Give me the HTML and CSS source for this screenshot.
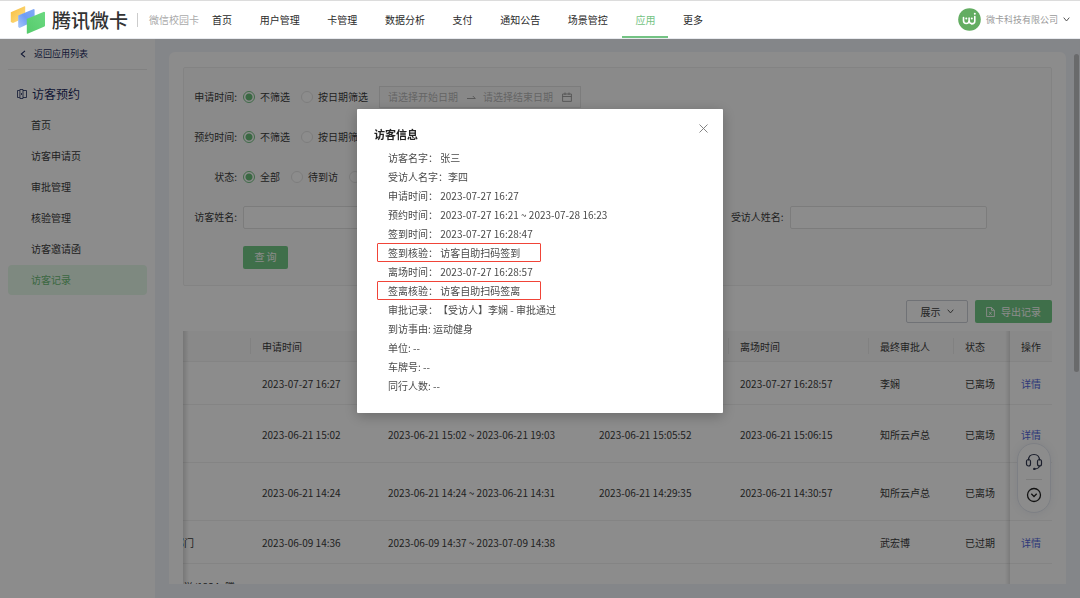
FILE: index.html
```html
<!DOCTYPE html>
<html lang="zh-CN">
<head>
<meta charset="utf-8">
<title>腾讯微卡 - 访客记录</title>
<link rel="stylesheet" href="styles.css">
</head>
<body>
<header class="topbar">
  <svg class="logo" width="36" height="28" viewBox="0 0 36 28" aria-hidden="true">
    <defs>
      <linearGradient id="ly" x1="0" y1="0" x2="1" y2="1"><stop offset="0" stop-color="#f8bd3a"/><stop offset="1" stop-color="#fde08c"/></linearGradient>
      <linearGradient id="lb" x1="0" y1="1" x2="1" y2="0"><stop offset="0" stop-color="#a9c8fb"/><stop offset="0.500" stop-color="#6f9df5"/><stop offset="1" stop-color="#82aaf8"/></linearGradient>
      <linearGradient id="lg" x1="0" y1="1" x2="1" y2="0"><stop offset="0" stop-color="#56cb6c"/><stop offset="1" stop-color="#6bd981"/></linearGradient>
    </defs>
    <path fill="url(#ly)" d="M0.800 6.200 L14.600 0.200 L15.200 0.500 V7 L8.500 10 V14.500 L3 17 L0.800 16Z"/>
    <path fill="url(#lb)" d="M8.200 9.500 L23.800 3 L24.600 3.400 V10 L17 13.500 V18.500 L9.500 22 L8.200 21Z"/>
    <path fill="url(#lg)" d="M17 12.800 L34 5.800 L35 6.200 V19.800 L34.500 20.500 L17.500 27.800 L16.800 27.400 V13.200Z"/>
  </svg>
  <span class="brand">腾讯微卡</span>
  <span class="product">微信校园卡</span>
  <nav class="nav">
    <a href="#">首页</a><a href="#">用户管理</a><a href="#">卡管理</a><a href="#">数据分析</a><a href="#">支付</a><a href="#">通知公告</a><a href="#">场景管控</a><a href="#" class="current">应用</a><a href="#">更多</a>
  </nav>
  <button class="account" type="button">
    <svg width="23" height="23" viewBox="0 0 23 23" aria-hidden="true"><circle cx="11.500" cy="11.500" r="11.300" fill="#63ad62"/><g fill="none" stroke="#fff" stroke-width="1.600" stroke-linecap="round"><path d="M5.500 9.500v3q0 3 2.800 3t2.800-3v-2.500M11.100 12.500q0 3 2.600 3M16.800 8.500v4.500q0 3-3.300 2.900"/></g><g fill="#fff"><circle cx="8.300" cy="10.600" r="1"/><circle cx="13.800" cy="10.600" r="1"/><circle cx="16.800" cy="5.800" r="1"/></g></svg>
    <span>微卡科技有限公司</span>
    <svg width="7" height="5" viewBox="0 0 7 5" aria-hidden="true"><path d="M0.700 0.600 3.500 4 6.300 0.600" fill="none" stroke="#555" stroke-width="1"/></svg>
  </button>
</header>

<div class="layout">
  <aside class="sidebar">
    <a href="#" class="back"><svg width="6" height="8" viewBox="0 0 6 8" aria-hidden="true"><path d="M5 0.800 1.300 4 5 7.200" fill="none" stroke="#1d2b5e" stroke-width="1.100"/></svg>返回应用列表</a>
    <h2 class="group">
      <svg width="10" height="10" viewBox="0 0 10 10" aria-hidden="true"><path d="M2.700 1.500H0.500V8.500H2.700M2.900 0.500H6V9.500H2.900ZM6 1.500H9.500V8.500H6M4.500 4V6" fill="none" stroke="#1d2b5e" stroke-width="0.800"/></svg>访客预约</h2>
    <ul class="menu">
      <li><a href="#">首页</a></li>
      <li><a href="#">访客申请页</a></li>
      <li><a href="#">审批管理</a></li>
      <li><a href="#">核验管理</a></li>
      <li><a href="#">访客邀请函</a></li>
      <li><a href="#" class="active">访客记录</a></li>
    </ul>
  </aside>

  <main class="content">
    <section class="card">
      <form class="filters">
        <div class="row">
          <span class="label">申请时间:</span>
          <label class="radio"><input type="radio" name="apply" checked>不筛选</label>
          <label class="radio"><input type="radio" name="apply">按日期筛选</label>
          <div class="range">
            <input type="text" placeholder="请选择开始日期" aria-label="开始日期" disabled>
            <svg width="9" height="5" viewBox="0 0 9 5" aria-hidden="true"><path d="M0 3.500H8.300L5.800 1" fill="none" stroke="#999" stroke-width="0.900"/></svg>
            <input type="text" placeholder="请选择结束日期" aria-label="结束日期" disabled>
            <svg width="10" height="10" viewBox="0 0 10 10" aria-hidden="true"><path d="M0.600 2H9.400V9.400H0.600ZM0.600 4.500H9.400M3 0.500V3M7 0.500V3" fill="none" stroke="#999" stroke-width="0.900"/></svg>
          </div>
        </div>
        <div class="row">
          <span class="label">预约时间:</span>
          <label class="radio"><input type="radio" name="book" checked>不筛选</label>
          <label class="radio"><input type="radio" name="book">按日期筛选</label>
        </div>
        <div class="row">
          <span class="label">状态:</span>
          <label class="radio"><input type="radio" name="state" checked>全部</label>
          <label class="radio"><input type="radio" name="state">待到访</label>
          <label class="radio"><input type="radio" name="state" aria-label="已到访"></label>
        </div>
        <div class="fields">
          <div class="row"><label class="label" for="visitor">访客姓名:</label><input class="text" id="visitor" type="text"></div>
          <div class="row last"><label class="label" for="host">受访人姓名:</label><input class="text" id="host" type="text"></div>
        </div>
        <div class="row"><span class="label"></span><button class="btn primary" type="button">查 询</button></div>
      </form>

      <div class="toolbar">
        <button class="btn show" type="button">展示<svg width="7" height="5" viewBox="0 0 7 5" aria-hidden="true"><path d="M0.700 0.700 3.500 3.900 6.300 0.700" fill="none" stroke="#444" stroke-width="0.900"/></svg></button>
        <button class="btn primary export" type="button"><svg width="9" height="10" viewBox="0 0 9 10" aria-hidden="true"><path d="M0.600 0.500H5.500L8.400 3.300V9.500H0.600ZM5.500 0.500V3.300H8.400M3.200 4.800 5.600 7.800M5.600 4.800 3.200 7.800" fill="none" stroke="#fff" stroke-width="0.900"/></svg>导出记录</button>
      </div>

      <div class="tablewrap">
        <table class="records">
          <colgroup><col class="c-dept"><col class="c-apply"><col class="c-book"><col class="c-in"><col class="c-out"><col class="c-who"><col class="c-state"><col class="c-op"></colgroup>
          <thead><tr><th></th><th>申请时间</th><th></th><th></th><th>离场时间</th><th>最终审批人</th><th>状态</th><th>操作</th></tr></thead>
          <tbody>
            <tr class="short"><td></td><td>2023-07-27 16:27</td><td></td><td></td><td>2023-07-27 16:28:57</td><td>李娴</td><td>已离场</td><td><a href="#">详情</a></td></tr>
            <tr class="tall"><td></td><td>2023-06-21 15:02</td><td>2023-06-21 15:02 ~ 2023-06-21 19:03</td><td>2023-06-21 15:05:52</td><td>2023-06-21 15:06:15</td><td>知所云卢总</td><td>已离场</td><td><a href="#">详情</a></td></tr>
            <tr class="tall"><td></td><td>2023-06-21 14:24</td><td>2023-06-21 14:24 ~ 2023-06-21 14:31</td><td>2023-06-21 14:29:35</td><td>2023-06-21 14:30:57</td><td>知所云卢总</td><td>已离场</td><td><a href="#">详情</a></td></tr>
            <tr class="short"><td class="cut"><div class="tail">部门</div></td><td>2023-06-09 14:36</td><td>2023-06-09 14:37 ~ 2023-07-09 14:38</td><td></td><td></td><td>武宏博</td><td>已过期</td><td><a href="#">详情</a></td></tr>
            <tr class="tall partial"><td class="cut"><div class="tail wide">学/1234_腾</div></td><td></td><td></td><td></td><td></td><td></td><td></td><td></td></tr>
          </tbody>
        </table>
      </div>
    </section>
    <div class="scrollthumb"></div>
  </main>
</div>

<div class="float">
  <button type="button" aria-label="客服"><svg width="18" height="18" viewBox="0 0 18 18" aria-hidden="true"><g fill="none" stroke="#333a52" stroke-width="1.200"><path d="M3.500 7.500Q3.500 1.500 9 1.500T14.500 7.500M14.600 12.500Q14 15.800 10 15.900"/><rect x="1.500" y="6.500" width="4" height="6.500" rx="2"/><rect x="12.500" y="6.500" width="4" height="6.500" rx="2"/></g><circle cx="9.300" cy="15.900" r="1.200" fill="#333a52"/></svg></button>
  <button type="button" aria-label="收起"><svg width="16" height="16" viewBox="0 0 16 16" aria-hidden="true"><circle cx="8" cy="8" r="6.500" fill="none" stroke="#222" stroke-width="1.300"/><path d="M5.300 6.800 8 9.500 10.700 6.800" fill="none" stroke="#222" stroke-width="1.300"/></svg></button>
</div>

<div class="mask">
  <div class="modal" role="dialog" aria-labelledby="dlg">
    <div class="modal-head">
      <h1 id="dlg">访客信息</h1>
      <button type="button" class="close" aria-label="关闭"><svg width="9" height="9" viewBox="0 0 9 9" aria-hidden="true"><path d="M0.500 0.500 8.500 8.500M8.500 0.500 0.500 8.500" fill="none" stroke="#777" stroke-width="0.900"/></svg></button>
    </div>
    <ul class="info">
      <li>访客名字： 张三</li>
      <li>受访人名字：李四</li>
      <li>申请时间： 2023-07-27 16:27</li>
      <li>预约时间： 2023-07-27 16:21 ~ 2023-07-28 16:23</li>
      <li>签到时间： 2023-07-27 16:28:47</li>
      <li class="marked">签到核验： 访客自助扫码签到</li>
      <li>离场时间： 2023-07-27 16:28:57</li>
      <li class="marked">签离核验： 访客自助扫码签离</li>
      <li>审批记录：【受访人】李娴 - 审批通过</li>
      <li>到访事由: 运动健身</li>
      <li>单位: --</li>
      <li>车牌号: --</li>
      <li>同行人数: --</li>
    </ul>
  </div>
</div>
</body>
</html>
```
FILE: styles.css
```css
* { box-sizing: border-box; }
body {
  margin: 0;
  height: 100vh;
  display: flex;
  flex-direction: column;
  overflow: hidden;
  font: 10px/14px "Noto Sans CJK SC", sans-serif;
  color: #3c3c3c;
  background: #f1f4f9;
  text-spacing-trim: space-all;
}
a { color: inherit; text-decoration: none; }
button, input { font: inherit; color: inherit; }
button { padding: 0; border: 0; background: none; }
ul { margin: 0; padding: 0; list-style: none; }
svg { flex: none; }

.topbar {
  flex: none;
  height: 39px;
  display: flex;
  align-items: center;
  padding: 0 10px;
  background: #fff;
  border-top: 1px solid #dcdcdc;
  border-bottom: 1px solid #e8eaee;
}
.brand { margin-left: 6px; font-size: 19px; line-height: 26px; font-weight: 500; color: #333; }
.product { margin-left: 9px; padding-left: 11px; border-left: 1px solid #ccc; color: #aaa; white-space: nowrap; }
.nav { display: flex; justify-content: space-between; width: 517px; align-self: stretch; }
.nav a { display: flex; align-items: center; padding: 2px 13px 0; border-bottom: 2px solid transparent; white-space: nowrap; color: #2a2a2a; }
.nav .current { color: #74c384; border-color: #74c384; }
.account { margin-left: auto; display: flex; align-items: center; gap: 5px; font-size: 9px; color: #999; white-space: nowrap; }

.layout { flex: 1; min-height: 0; display: flex; }
.sidebar { flex: none; width: 155px; padding: 0 8px; background: #fff; }
.back { display: flex; align-items: center; gap: 8px; height: 31px; padding-left: 12px; font-size: 9px; color: #1d2b5e; border-bottom: 1px solid #ececec; }
.group { display: flex; align-items: center; gap: 5px; height: 31px; margin: 9px 0 0; padding: 0 0 2px 9px; font-size: 12px; font-weight: 400; color: #1d2b5e; }
.menu { display: grid; gap: 1px; }
.menu a { display: flex; align-items: center; height: 30px; padding-left: 23px; border-radius: 4px; }
.menu .active { color: #6bbd76; background: #e6f9e9; }

.content { flex: 1; min-width: 0; display: flex; padding: 13px 1px 14px 14px; }
.card { flex: 1; min-width: 0; padding: 15px 14px 0; background: #fff; border-radius: 6px 6px 0 0; overflow: hidden; display: flex; flex-direction: column; }
.scrollthumb { flex: none; width: 5px; height: 318px; margin: 2px 0 0 8px; border-radius: 3px; background: #c0c1c4; }

.filters { flex: none; padding: 9px 0 8px; border: 1px solid #eee; border-radius: 2px; background: #fcfcfc; }
.row { display: flex; align-items: center; height: 40px; }
.label { width: 53px; margin-right: 6px; text-align: right; white-space: nowrap; }
.radio { display: flex; align-items: center; gap: 5px; margin-right: 11px; white-space: nowrap; }
.radio input { appearance: none; width: 12px; height: 12px; margin: 0; border: 1px solid #e4e4e4; border-radius: 50%; background: #fff; }
.radio input:checked { border-color: #74c384; background: radial-gradient(circle, #68bd79 3px, #fff 4px); }
.range { display: flex; align-items: center; width: 202px; height: 22px; padding: 0 8px; border: 1px solid #e2e2e2; background: #f8f8f8; gap: 7px; }
.range input { flex: 1; min-width: 0; padding: 0; border: 0; background: none; }
.range input::placeholder { color: #b8b8b8; }
.fields { display: grid; grid-template-columns: repeat(3, 1fr); padding-right: 47px; }
.fields .last { grid-column: 3; }
.text { flex: 1; min-width: 0; height: 23px; margin-right: 17px; border: 1px solid #e2e2e2; border-radius: 2px; background: #fff; }
.btn { display: flex; align-items: center; justify-content: center; height: 23px; border-radius: 2px; white-space: nowrap; }
.primary { width: 45px; color: #fff; background: #74cb87; }
.toolbar { flex: none; display: flex; justify-content: flex-end; gap: 7px; margin: 14px 0 8px; }
.show { width: 62px; gap: 6px; border: 1px solid #cccfd8; background: #fff; }
.export { width: 77px; gap: 6px; }

.tablewrap { position: relative; flex: 1; min-height: 0; overflow: hidden; }
.tablewrap::before { content: ""; position: absolute; inset: 0 auto 0 0; width: 6px; background: linear-gradient(to right, rgba(0,0,0,.14), transparent); }
.records { width: 100%; table-layout: fixed; border-collapse: separate; border-spacing: 0; }
.c-dept { width: 68px; } .c-apply { width: 126px; } .c-book { width: 211px; } .c-in { width: 141px; }
.c-out { width: 140px; } .c-who { width: 85px; } .c-state { width: 56px; } .c-op { width: 43px; }
.records th, .records td { padding: 2px 0 0 11px; text-align: left; font-weight: 400; white-space: nowrap; border-bottom: 1px solid #f0f0f0; }
.records th { height: 31px; background: linear-gradient(#ececec, #ececec) right center / 1px 16px no-repeat #fafafa; }
.records th:nth-child(n+7) { background: #fafafa; }
.records .short td { height: 43px; }
.records .tall td { height: 58px; }
.records .partial td { padding-top: 16px; vertical-align: top; }
.records td.cut { padding-left: 0; }
.records tr > :last-child { position: relative; }
.records tr > :last-child::before { content: ""; position: absolute; inset: 0 100% -1px auto; width: 5px; background: linear-gradient(to left, rgba(0,0,0,.12), transparent); }
.records td a { color: #5468dc; }
.tail { display: flex; justify-content: flex-end; width: 11px; overflow: hidden; }
.tail.wide { width: 52px; }

.float { position: fixed; right: 29px; bottom: 85px; width: 34px; height: 70px; display: flex; flex-direction: column; align-items: center; justify-content: center; gap: 8px; border: 1px solid #e4e8f0; border-radius: 17px; background: #fff; box-shadow: 0 0 8px rgba(60,80,130,.1); }
.float button { display: flex; }
.float button + button { padding-top: 7px; border-top: 1px solid #e4e4e4; }

.mask { position: fixed; inset: 39px 0 0; background: rgba(0,0,0,.45); display: flex; justify-content: center; align-items: flex-start; padding-top: 70px; }
.modal { width: 366px; padding: 15px 15px 18px 17px; background: #fff; border-radius: 1px; box-shadow: 0 3px 14px rgba(0,0,0,.25); }
.modal-head { display: flex; justify-content: space-between; align-items: flex-start; height: 24px; }
.modal h1 { margin: 2px 0 0; font-size: 11px; line-height: 16px; font-weight: 700; color: #222; }
.close { display: flex; }
.info { padding-left: 14px; color: #4a4a4a; }
.info li { height: 19px; line-height: 19px; white-space: nowrap; }
.info .marked { width: 164px; margin-left: -11px; padding-left: 10px; line-height: 17px; border: 1px solid #f04438; border-radius: 1px; }
```
